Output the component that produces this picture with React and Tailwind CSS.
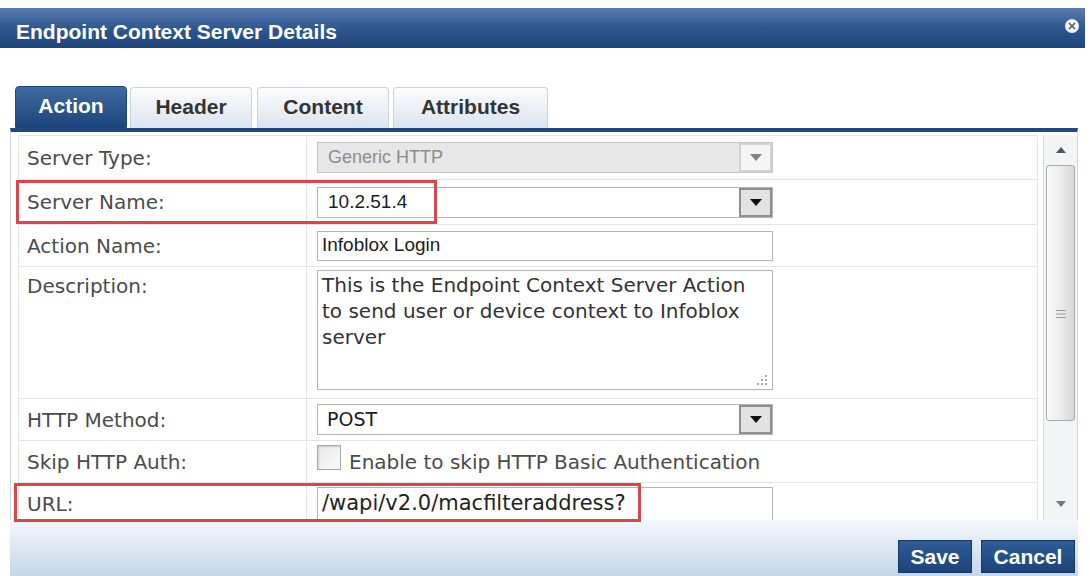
import React from 'react';

const dv = "font-['DejaVu_Sans',sans-serif]";
const lib = "font-['Liberation_Sans',Arial,sans-serif]";

const Caret = ({ dim }) => (
  <svg width="12" height="7" viewBox="0 0 12 7">
    <path d="M0 0h12L6 7z" fill={dim ? '#808080' : '#111'} />
  </svg>
);

const Select = ({ value, disabled, font = lib, size = 'text-[19px]', pl = 'pl-[10px]' }) => (
  <div
    className={`flex h-[31px] w-[456px] border ${
      disabled ? 'border-[#c6c6c6] bg-[#e7e7e7] text-[#8c8c8c]' : 'border-[#b4b4b4] bg-white text-[#1c1c1c]'
    }`}
  >
    <div className={`flex flex-1 items-center ${pl} ${font} ${size}`}>{value}</div>
    <div
      className={`flex w-[33px] items-center justify-center border-2 ${
        disabled ? 'border-[#d2d2d2] bg-[#f5f5f5]' : 'border-[#8e8e8e] bg-[#e2e2e2]'
      }`}
    >
      <Caret dim={disabled} />
    </div>
  </div>
);

const Row = ({ label, h, top, children, alignTop }) => (
  <div className={`flex border-b border-[#e2e4e6] ${h}`}>
    <div
      className={`flex w-[288px] shrink-0 border-r border-[#e2e4e6] pl-[8px] text-[20px] text-[#4b4b4b] ${dv} ${
        alignTop ? 'items-start pt-[4px]' : 'items-center'
      }`}
    >
      {label}
    </div>
    <div className={`flex flex-1 pl-[10px] ${top ? `items-start ${top}` : 'items-center'}`}>{children}</div>
  </div>
);

const Tab = ({ children, w, active, ml }) => (
  <div
    className={`flex items-center justify-center rounded-t-[4px] border pb-[3px] text-[21px] font-bold ${lib} ${w} ${ml} ${
      active
        ? 'h-[42px] border-[#1d467a] bg-linear-to-b from-[#3f6aa2] to-[#1c467b] text-white'
        : 'h-[41px] border-[#c9d3de] border-b-0 bg-linear-to-b from-[#fbfcfd] to-[#dbe4ee] text-[#333]'
    }`}
  >
    {children}
  </div>
);

export default function App() {
  return (
    <div className="relative h-[576px] w-[1090px] overflow-hidden bg-white pt-[8px]">
      {/* title bar */}
      <div className="flex h-[40px] w-[1085px] justify-between bg-linear-to-b from-[#5a7eb0] via-[#2e5891] to-[#1c467b]">
        <div className={`flex items-center pl-[16px] pt-[7px] text-[21px] font-bold text-white ${lib}`}>
          Endpoint Context Server Details
        </div>
        <div className="mr-[6px] mt-[11px] flex h-[14px] w-[14px] items-center justify-center rounded-full bg-[radial-gradient(circle,#ffffff_40%,#cdd6e2_100%)]">
          <svg width="8" height="8" viewBox="0 0 8 8">
            <path d="M1 1l6 6M7 1L1 7" stroke="#6a6f78" strokeWidth="1.8" />
          </svg>
        </div>
      </div>

      {/* tabs */}
      <div className="mt-[38px] flex h-[42px] items-end pl-[15px]">
        <Tab w="w-[112px]" active>Action</Tab>
        <Tab w="w-[122px]" ml="ml-[3px]">Header</Tab>
        <Tab w="w-[132px]" ml="ml-[5px]">Content</Tab>
        <Tab w="w-[155px]" ml="ml-[4px]">Attributes</Tab>
      </div>

      {/* panel */}
      <div className="ml-[10px] flex h-[392px] w-[1068px] overflow-hidden border-x border-t-4 border-x-[#cfd6de] border-t-[#1f4a7f] bg-white pl-[7px] pt-[3px]">
        <div className="h-[400px] w-[1020px] shrink-0 border-x border-t border-[#e2e4e6]">
          <Row label="Server Type:" h="h-[44px]">
            <Select value="Generic HTTP" disabled size="text-[18px]" />
          </Row>
          <Row label="Server Name:" h="h-[45px]">
            <Select value="10.2.51.4" />
          </Row>
          <Row label="Action Name:" h="h-[42px]">
            <div className={`flex h-[30px] w-[456px] items-center border border-[#b4b4b4] pl-[4px] text-[19px] text-[#1c1c1c] ${lib}`}>
              Infoblox Login
            </div>
          </Row>
          <Row label="Description:" h="h-[132px]" top="pt-[3px]" alignTop>
            <div className={`relative h-[120px] w-[456px] border border-[#b4b4b4] pl-[4px] pt-[1px] text-[20px] leading-[26px] text-[#333] ${dv}`}>
              This is the Endpoint Context Server Action
              <br />
              to send user or device context to Infoblox
              <br />
              server
              <svg className="absolute bottom-[3px] right-[4px]" width="12" height="12" viewBox="0 0 12 12">
                <g fill="#a8a8a8">
                  <rect x="9" y="1" width="2" height="2" />
                  <rect x="9" y="5" width="2" height="2" />
                  <rect x="5" y="5" width="2" height="2" />
                  <rect x="9" y="9" width="2" height="2" />
                  <rect x="5" y="9" width="2" height="2" />
                  <rect x="1" y="9" width="2" height="2" />
                </g>
              </svg>
            </div>
          </Row>
          <Row label="HTTP Method:" h="h-[42px]">
            <Select value="POST" font={dv} pl="pl-[9px]" />
          </Row>
          <Row label="Skip HTTP Auth:" h="h-[42px]">
            <div className={`flex items-center text-[20px] text-[#4b4b4b] ${dv}`}>
              <span className="-mt-[8px] h-[25px] w-[24px] border border-[#a9a9a9] bg-linear-to-br from-[#e9e9e9] to-[#fafafa] shadow-[inset_1px_1px_2px_rgba(0,0,0,0.15)]" />
              <span className="ml-[8px]">Enable to skip HTTP Basic Authentication</span>
            </div>
          </Row>
          <Row label="URL:" h="h-[42px]" top="pt-[4px]">
            <div className={`flex h-[34px] w-[456px] items-center border border-[#b4b4b4] pl-[4px] text-[21px] text-[#222] ${dv}`}>
              /wapi/v2.0/macfilteraddress?
            </div>
          </Row>
        </div>

        {/* scrollbar */}
        <div className="ml-auto flex h-full w-[34px] flex-col border-l border-[#d6d9dc] bg-[#f3f4f5]">
          <div className="flex h-[30px] items-center justify-center">
            <svg width="10" height="6" viewBox="0 0 10 6">
              <path d="M0 6h10L5 0z" fill="#555" />
            </svg>
          </div>
          <div className="mx-[2px] flex h-[256px] items-start justify-center rounded-[3px] border border-[#a9acb0] bg-linear-to-r from-[#fafafa] via-[#ececec] to-[#d6d6d6] pt-[143px]">
            <svg width="10" height="10" viewBox="0 0 10 10">
              <path d="M0 1.5h10M0 5h10M0 8.5h10" stroke="#9a9a9a" strokeWidth="1.2" />
            </svg>
          </div>
          <div className="flex-1" />
          <div className="flex h-[30px] items-center justify-center pb-[2px]">
            <svg width="10" height="6" viewBox="0 0 10 6">
              <path d="M0 0h10L5 6z" fill="#777" />
            </svg>
          </div>
        </div>
      </div>

      {/* footer */}
      <div className="ml-[10px] flex h-[56px] w-[1068px] items-start justify-end gap-[9px] bg-linear-to-b from-[#f4f7fb] to-[#c5d6ea] pr-[3px] pt-[20px]">
        <button className={`h-[33px] w-[74px] border border-[#163a68] bg-linear-to-b from-[#2f5c97] to-[#1b4479] text-[21px] font-bold text-white ${lib}`}>
          Save
        </button>
        <button className={`h-[33px] w-[94px] border border-[#163a68] bg-linear-to-b from-[#2f5c97] to-[#1b4479] text-[21px] font-bold text-white ${lib}`}>
          Cancel
        </button>
      </div>

      {/* annotation boxes */}
      <div className="pointer-events-none absolute left-[16px] top-[180px] h-[44px] w-[421px] border-[3px] border-[#d8474b]" />
      <div className="pointer-events-none absolute left-[14px] top-[483px] h-[39px] w-[627px] border-[3px] border-[#d8474b]" />
    </div>
  );
}
